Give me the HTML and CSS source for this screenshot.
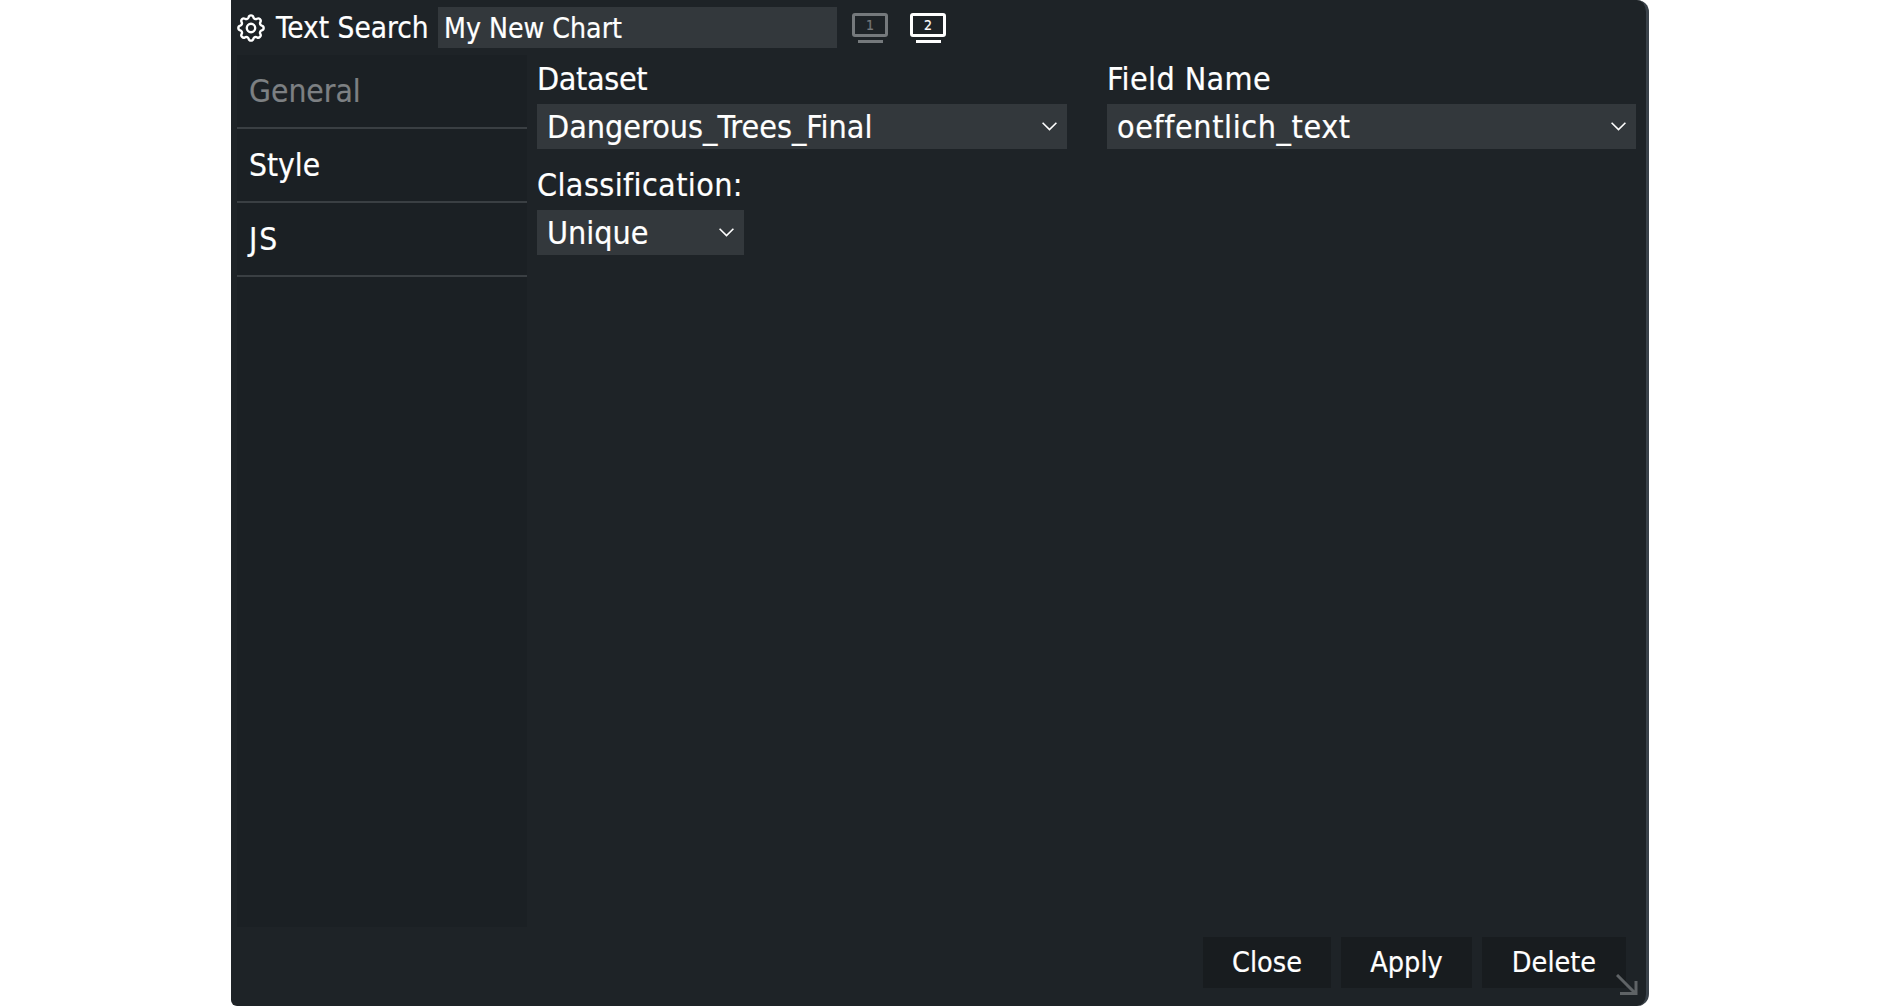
FILE: index.html
```html
<!DOCTYPE html>
<html lang="en">
<head>
<meta charset="utf-8">
<title>Text Search</title>
<link rel="stylesheet" href="styles.css">
</head>
<body>
<div class="window">
  <header class="titlebar">
    <svg class="gear" viewBox="2 2 20 20" fill="none" stroke="#fff" stroke-width="1.700" stroke-linecap="round" stroke-linejoin="round"><path d="M10.3 4.3c.4-1.800 3-1.800 3.400 0a1.700 1.700 0 0 0 2.600 1.100c1.500-.9 3.300.8 2.400 2.400a1.700 1.700 0 0 0 1 2.500c1.800.4 1.800 3 0 3.400a1.700 1.700 0 0 0-1 2.600c.9 1.500-.9 3.300-2.400 2.400a1.700 1.700 0 0 0-2.600 1c-.4 1.800-3 1.800-3.400 0a1.700 1.700 0 0 0-2.600-1c-1.500.9-3.300-.9-2.400-2.400a1.700 1.700 0 0 0-1-2.600c-1.800-.4-1.800-3 0-3.400a1.700 1.700 0 0 0 1-2.500c-.9-1.600.9-3.300 2.400-2.400 1 .6 2.300.1 2.600-1.100z"/><circle cx="12" cy="12" r="3"/></svg>
    <span class="title">Text Search</span>
    <div class="name-input">My New Chart</div>
    <div class="monitors">
      <div class="monitor dim"><span class="screen">1</span><span class="stand"></span></div>
      <div class="monitor"><span class="screen">2</span><span class="stand"></span></div>
    </div>
  </header>
  <div class="body">
    <nav class="sidebar">
      <div class="tab active">General</div>
      <div class="tab">Style</div>
      <div class="tab js">JS</div>
    </nav>
    <main class="content">
      <div class="row">
        <div class="field">
          <div class="label tight">Dataset</div>
          <div class="select">Dangerous_Trees_Final<svg class="chev" viewBox="0 0 16 10"><path d="M1.500 1.500 8 8l6.500-6.500"/></svg></div>
        </div>
        <div class="field right">
          <div class="label wide">Field Name</div>
          <div class="select"><span class="wide-value">oeffentlich_text</span><svg class="chev" viewBox="0 0 16 10"><path d="M1.500 1.500 8 8l6.500-6.500"/></svg></div>
        </div>
      </div>
      <div class="field small">
        <div class="label wide">Classification:</div>
        <div class="select">Unique<svg class="chev" viewBox="0 0 16 10"><path d="M1.500 1.500 8 8l6.500-6.500"/></svg></div>
      </div>
    </main>
  </div>
  <footer class="footer">
    <div class="btn close">Close</div>
    <div class="btn apply">Apply</div>
    <div class="btn delete">Delete</div>
  </footer>
  <svg class="resizer" viewBox="0 0 22 21" fill="none" stroke="#5f6366" stroke-width="3"><path d="M1 1 19 19M20 7v12.500H4"/></svg>
</div>
</body>
</html>
```
FILE: styles.css
```css
html, body { margin: 0; padding: 0; height: 100%; background: #fff; }
body { padding-left: 231px; font-family: "DejaVu Sans", sans-serif; font-stretch: condensed; overflow: hidden; -webkit-text-stroke: 0.2px currentColor; }
.window {
  position: relative;
  width: 1409px;
  height: 1006px;
  background: #1e2327;
  border-right: 3px solid #3a424a;
  border-radius: 0 12px 12px 6px;
  color: #fff;
  display: flex;
  flex-direction: column;
  padding-left: 6px;
  box-sizing: content-box;
}
.titlebar { height: 55px; display: flex; align-items: center; flex: none; }
.gear { width: 28px; height: 28px; flex: none; margin-top: 1px; }
.title { font-size: 29.500px; margin: 1px 0 0 11px; width: 162px; white-space: nowrap; }
.name-input { width: 399px; height: 41px; line-height: 43px; background: #33383c; font-size: 28.200px; padding-left: 6px; box-sizing: border-box; white-space: nowrap; }
.monitors { display: flex; gap: 22px; margin-left: 15px; }
.monitor { width: 36px; display: flex; flex-direction: column; align-items: center; gap: 3px; }
.screen { width: 36px; height: 24px; border: 3px solid #fff; border-radius: 3px; box-sizing: border-box; font-size: 14px; line-height: 18px; text-align: center; }
.stand { width: 25px; height: 3px; background: #fff; }
.monitor.dim .screen { border-color: #75797c; color: #75797c; }
.monitor.dim .stand { background: #75797c; }
.body { display: flex; flex: none; height: 872px; }
.sidebar { width: 290px; background: #1b2024; flex: none; }
.tab { height: 74px; line-height: 72px; padding-left: 12px; font-size: 31.500px; border-bottom: 2px solid #3a3f43; box-sizing: border-box; }
.tab.active { color: #7d8083; }
.tab.js { letter-spacing: 2px; }
.content { flex: 1; padding-left: 10px; display: flex; flex-direction: column; gap: 12px; }
.row { display: flex; gap: 40px; }
.field { width: 530px; display: flex; flex-direction: column; }
.field.right { width: 529px; }
.field.small { width: 207px; }
.label { font-size: 32px; height: 49px; line-height: 49px; white-space: nowrap; }
.label.tight { letter-spacing: -0.35px; }
.label.wide { letter-spacing: 0.38px; }
.wide-value { letter-spacing: 0.6px; }
.select { height: 45px; padding: 1px 10px 0; box-sizing: border-box; background: #33383c; font-size: 32px; display: flex; align-items: center; justify-content: space-between; white-space: nowrap; }
.chev { width: 17px; height: 11px; fill: none; stroke: #fff; stroke-width: 1.500; flex: none; margin-right: -1px; margin-top: -1px; }
.footer { display: flex; justify-content: flex-end; gap: 10px; padding: 10px 20px 0 0; }
.btn { height: 51px; line-height: 51px; background: #181c1f; font-size: 28.500px; text-align: center; box-sizing: border-box; }
.close { width: 128px; }
.apply { width: 131px; }
.delete { width: 144px; }
.resizer { position: absolute; right: 8px; bottom: 11px; width: 22px; height: 21px; }
```
